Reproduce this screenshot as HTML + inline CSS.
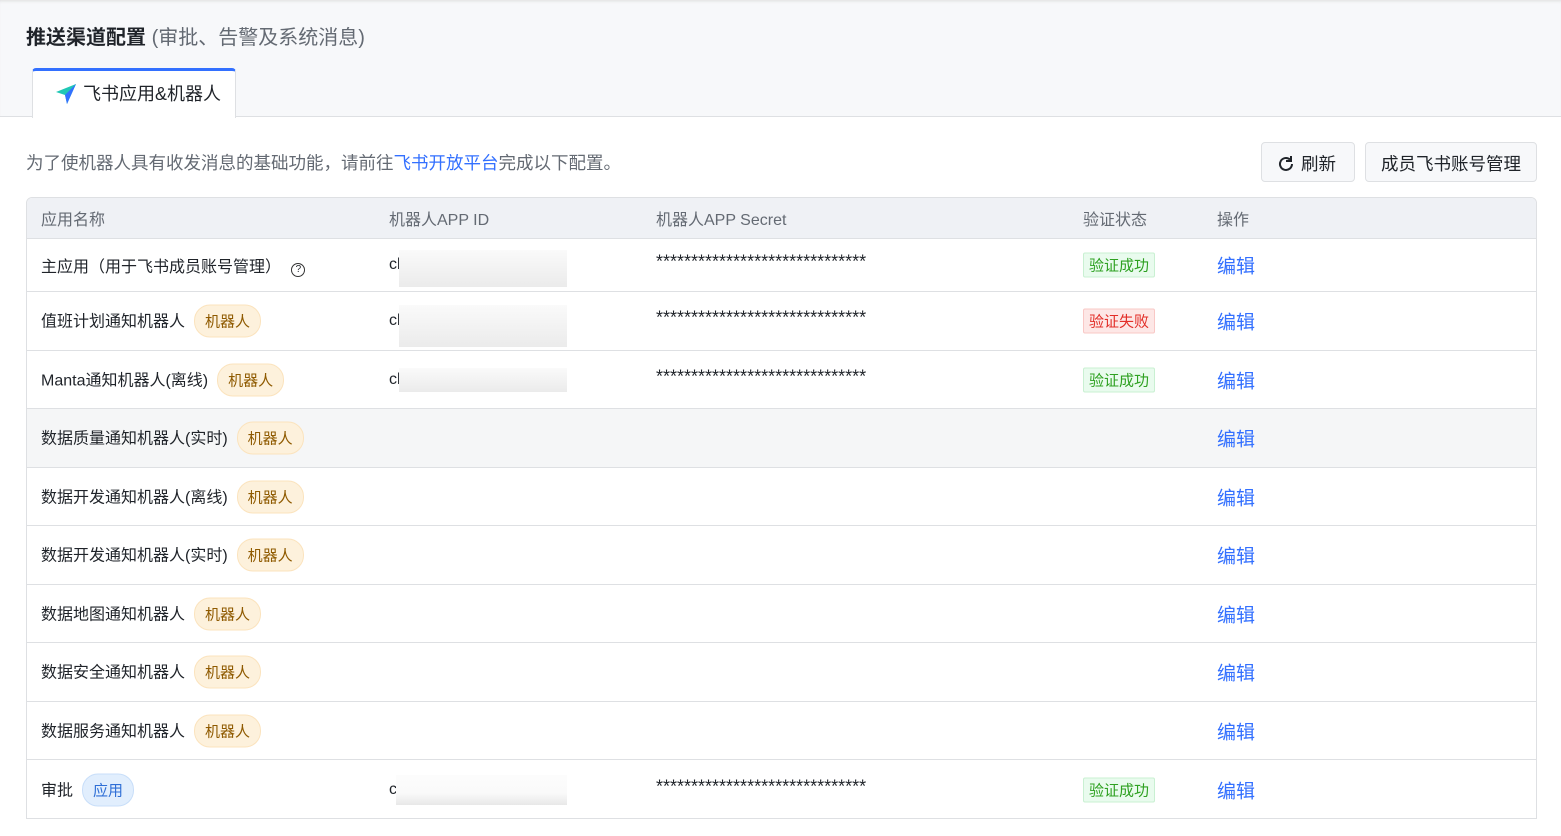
<!DOCTYPE html>
<html><head><meta charset="utf-8"><style>
*{box-sizing:border-box;margin:0;padding:0}
body{width:1561px;height:836px;overflow:hidden;background:#fff;font-family:"Liberation Sans","Noto Sans CJK SC",sans-serif;color:#1f2329;position:relative}
.top{position:absolute;left:0;top:0;width:1561px;height:117px;background:#f7f8fa;border-bottom:1px solid #dee0e3;box-shadow:inset 0 3px 3px -2px #ddd}
.title{position:absolute;left:26px;top:21px;font-size:20px;font-weight:bold;color:#1f2329}
.title span{font-weight:normal;color:#646a73;font-size:20px}
.tab{position:absolute;left:32px;top:68px;width:204px;height:50px;background:#fff;border:1px solid #dee0e3;border-bottom:none;border-top:3px solid #3370ff;border-radius:4px 4px 0 0;font-size:18px;padding:9px 0 0 50px}
.tab svg{position:absolute;left:22px;top:12px}
.desc{position:absolute;left:26px;top:150px;font-size:17.5px;color:#646a73}
.desc a{color:#3370ff}
.btn{position:absolute;top:142px;height:40px;border:1px solid #dee0e3;border-radius:4px;background:#f7f8fa;font-size:17.5px;padding:8px 0 0 15px}
.tbl{position:absolute;left:26px;top:197px;width:1511px;height:622px;border:1px solid #dee0e3;border-radius:6px 6px 0 0;overflow:hidden}
.hd{position:absolute;left:0;top:0;width:100%;height:41px;background:#eff1f5;border-bottom:1px solid #dee0e3;font-size:16px;color:#646a73}
.row{position:absolute;left:0;width:100%;border-bottom:1px solid #dee0e3;font-size:16px}
.c{position:absolute;top:50%;transform:translateY(-50%);white-space:nowrap}
.s{font-size:18px;margin-top:-3px}
.tag{display:inline-block;border-radius:16px;padding:5px 10px;font-size:15px;margin-left:9px;background:#fdf1dc;border:1px solid #fbe3bd;color:#8f5a00}
.tag.b{background:#e1eefd;border-color:#c8def9;color:#2f6fd6}
.st{font-size:15px;padding:1px 5px;border-radius:2px}
.ok{background:#e9fbee;border:1px solid #c9f0d2;color:#2ea121}
.bad{background:#fde7e6;border:1px solid #f9c8c6;color:#e22e28}
.ed{color:#3370ff;font-size:19px}
.blur{position:absolute;background:linear-gradient(#fafafa,#ebebeb);}
</style></head><body>
<div class="top"></div>
<div class="title">推送渠道配置 <span>(审批、告警及系统消息)</span></div>
<div class="tab"><svg width="22" height="22" viewBox="0 0 22 22"><path d="M1 9 L21 1 L12 21 L10 12 Z" fill="#1fc7b5"/><path d="M21 1 L10 12 L12 21 Z" fill="#3370ff"/></svg>飞书应用&amp;机器人</div>
<div class="desc">为了使机器人具有收发消息的基础功能，请前往<a>飞书开放平台</a>完成以下配置。</div>
<div class="btn" style="left:1261px;width:94px"><svg width="18" height="18" viewBox="0 0 18 18" style="vertical-align:-3px;margin-right:6px"><path d="M15 9a6 6 0 1 1-2-4.5" fill="none" stroke="#1f2329" stroke-width="2"/><path d="M14 1v5h-5" fill="none" stroke="#1f2329" stroke-width="2"/></svg>刷新</div>
<div class="btn" style="left:1365px;width:172px">成员飞书账号管理</div>
<div class="tbl">
<div class="hd"><span class="c" style="left:14px">应用名称</span><span class="c" style="left:362px">机器人APP ID</span><span class="c" style="left:629px">机器人APP Secret</span><span class="c" style="left:1056px">验证状态</span><span class="c" style="left:1190px">操作</span></div>
<div class="row" style="top:41px;height:53px"><span class="c" style="left:14px">主应用（用于飞书成员账号管理） <span style="display:inline-block;width:14px;height:14px;border:1.5px solid #333;border-radius:50%;font-size:10px;text-align:center;line-height:11px;margin-left:6px">?</span></span><span class="c" style="left:362px">cl</span><span class="c s" style="left:629px">******************************</span><span class="c st ok" style="left:1056px">验证成功</span><span class="c ed" style="left:1190px">编辑</span></div>
<div class="row" style="top:94px;height:59px"><span class="c" style="left:14px">值班计划通知机器人<span class="tag">机器人</span></span><span class="c" style="left:362px">cl</span><span class="c s" style="left:629px">******************************</span><span class="c st bad" style="left:1056px">验证失败</span><span class="c ed" style="left:1190px">编辑</span></div>
<div class="row" style="top:153px;height:58px"><span class="c" style="left:14px">Manta通知机器人(离线)<span class="tag">机器人</span></span><span class="c" style="left:362px">cl</span><span class="c s" style="left:629px">******************************</span><span class="c st ok" style="left:1056px">验证成功</span><span class="c ed" style="left:1190px">编辑</span></div>
<div class="row" style="top:211px;height:59px;background:#f5f6f7"><span class="c" style="left:14px">数据质量通知机器人(实时)<span class="tag">机器人</span></span><span class="c ed" style="left:1190px">编辑</span></div>
<div class="row" style="top:270px;height:58px"><span class="c" style="left:14px">数据开发通知机器人(离线)<span class="tag">机器人</span></span><span class="c ed" style="left:1190px">编辑</span></div>
<div class="row" style="top:328px;height:59px"><span class="c" style="left:14px">数据开发通知机器人(实时)<span class="tag">机器人</span></span><span class="c ed" style="left:1190px">编辑</span></div>
<div class="row" style="top:387px;height:58px"><span class="c" style="left:14px">数据地图通知机器人<span class="tag">机器人</span></span><span class="c ed" style="left:1190px">编辑</span></div>
<div class="row" style="top:445px;height:59px"><span class="c" style="left:14px">数据安全通知机器人<span class="tag">机器人</span></span><span class="c ed" style="left:1190px">编辑</span></div>
<div class="row" style="top:504px;height:58px"><span class="c" style="left:14px">数据服务通知机器人<span class="tag">机器人</span></span><span class="c ed" style="left:1190px">编辑</span></div>
<div class="row" style="top:562px;height:59px;border-bottom:none"><span class="c" style="left:14px">审批<span class="tag b">应用</span></span><span class="c" style="left:362px">c</span><span class="c s" style="left:629px">******************************</span><span class="c st ok" style="left:1056px">验证成功</span><span class="c ed" style="left:1190px">编辑</span></div>
</div>
<div class="blur" style="left:399px;top:250px;width:168px;height:37px"></div>
<div class="blur" style="left:399px;top:305px;width:168px;height:42px"></div>
<div class="blur" style="left:399px;top:368px;width:168px;height:24px"></div>
<div class="blur" style="left:396px;top:775px;width:171px;height:30px;background:linear-gradient(#fcfcfc,#fafafa 60%,#e8e8e8)"></div>
</body></html>
